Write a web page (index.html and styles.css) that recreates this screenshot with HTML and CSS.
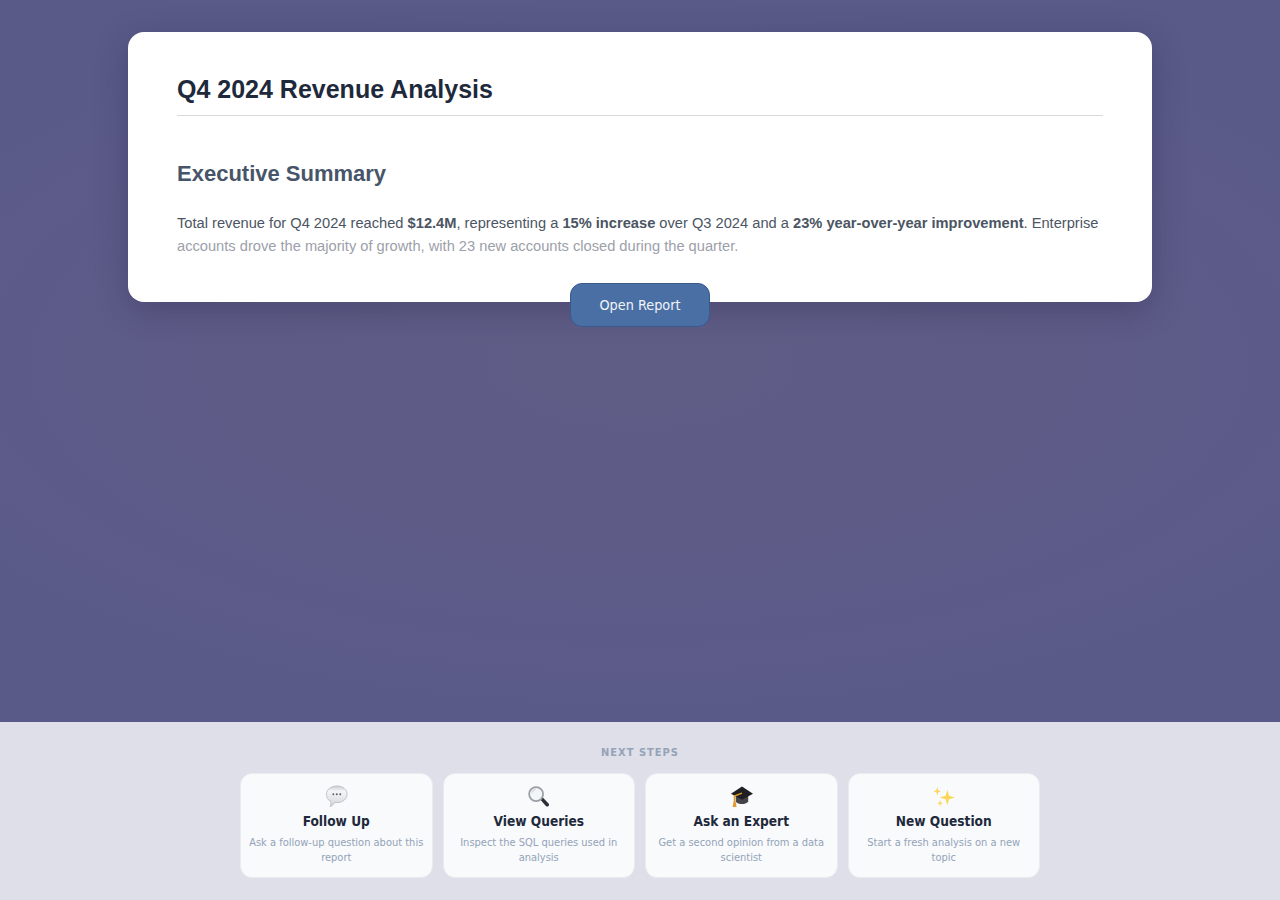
FILE: index.html
```html
<!DOCTYPE html>
<html lang="en">
<head>
  <meta charset="UTF-8">
  <title>Q4 2024 Revenue Analysis</title>
  <link rel="stylesheet" href="styles.css">
</head>
<body>
  <main class="stage">
    <div class="report-wrap">
      <article class="report">
        <h1>Q4 2024 Revenue Analysis</h1>
        <h2>Executive Summary</h2>
        <p>Total revenue for Q4 2024 reached <strong>$12.4M</strong>, representing a <strong>15% increase</strong> over Q3 2024 and a <strong>23% year-over-year improvement</strong>. Enterprise</p>
        <p class="fade">accounts drove the majority of growth, with 23 new accounts closed during the quarter.</p>
      </article>
      <button class="open-report">Open Report</button>
    </div>
  </main>

  <!-- Next steps panel -->
  <footer class="next-steps">
    <div class="next-label">NEXT STEPS</div>
    <div class="step-grid">
      <div class="step">
        <svg class="step-icon" viewBox="0 0 24 24">
          <defs>
            <linearGradient id="bubble" x1="0" y1="0" x2="0" y2="1">
              <stop offset="0" stop-color="#c9ccd1"/>
              <stop offset="0.25" stop-color="#f4f5f6"/>
              <stop offset="1" stop-color="#d4d6da"/>
            </linearGradient>
          </defs>
          <path d="M12.500 1c6 0 10.500 3.700 10.500 8.700s-4.500 8.700-10.500 8.700c-.9 0-1.700-.1-2.500-.2-1 2-2.500 3.500-4.700 4.300.8-1.700 1-3.300.8-5.300C3 15.700 1.500 13 1.500 9.700 1.500 4.700 6.500 1 12.500 1z" fill="url(#bubble)" stroke="#b4b7bc" stroke-width="0.800"/>
          <circle cx="8.700" cy="9.700" r="1" fill="#5c6068"/>
          <circle cx="12.300" cy="9.700" r="1" fill="#5c6068"/>
          <circle cx="15.900" cy="9.700" r="1" fill="#5c6068"/>
        </svg>
        <div class="step-title">Follow Up</div>
        <div class="step-desc">Ask a follow-up question about this report</div>
      </div>
      <div class="step">
        <svg class="step-icon" viewBox="0 0 24 24">
          <path d="M14 15.500l2.500-2.500 6 6.300c.8.900.7 2-.1 2.700s-1.900.8-2.700 0z" fill="#2c3036"/>
          <circle cx="9.500" cy="9.500" r="7.300" fill="#f3f6f8" stroke="#9a9fa6" stroke-width="1.800"/>
          <path d="M5 8c.6-2 2-3.200 4-3.500" fill="none" stroke="#d3d8dc" stroke-width="1.200"/>
        </svg>
        <div class="step-title">View Queries</div>
        <div class="step-desc">Inspect the SQL queries used in analysis</div>
      </div>
      <div class="step">
        <svg class="step-icon" viewBox="0 0 24 24">
          <path d="M6 10.500v7c2.500 2.700 9.500 3.700 13 0v-7z" fill="#44444a"/>
          <path d="M12.500 1.500L24 9 12.500 15.500 1 9z" fill="#1f1f23"/>
          <path d="M12.500 8.500L4.700 11.500V18" fill="none" stroke="#e39a2c" stroke-width="1.600"/>
          <path d="M3.600 17.500h2.300l1 5.500H2.800z" fill="#e39a2c"/>
        </svg>
        <div class="step-title">Ask an Expert</div>
        <div class="step-desc">Get a second opinion from a data scientist</div>
      </div>
      <div class="step">
        <svg class="step-icon" viewBox="0 0 24 24">
          <path d="M16 5l1.800 6.300L24 13l-6.200 1.800L16 21l-1.800-6.200L8 13l6.200-1.700z" fill="#fcd75a"/>
          <path d="M5.500 2l1 3.500 3 1-3 1-1 3.500-1-3.500-3-1 3-1z" fill="#fcd75a"/>
          <path d="M8.500 15.500l.8 2.700 2.200.8-2.200.8-.8 2.700-.8-2.700-2.200-.8 2.200-.8z" fill="#fcd75a"/>
        </svg>
        <div class="step-title">New Question</div>
        <div class="step-desc">Start a fresh analysis on a new topic</div>
      </div>
    </div>
  </footer>
</body>
</html>
```

FILE: styles.css
```css
/* Base styles */
html, body {
  height: 100%;
}
body {
  margin: 0;
  display: flex;
  flex-direction: column;
  font-family: "Liberation Sans", Arial, sans-serif;
  background-color: #dedfe8;
}

/* Dimmed report area */
.stage {
  height: 722px;
  box-sizing: border-box;
  padding-top: 32px;
  background: radial-gradient(ellipse 65% 50% at 50% 50%, #5f5c86 0%, #5e5b87 50%, #5a5a89 100%);
}
.report-wrap {
  position: relative;
  width: 1024px;
  margin: 0 auto;
}
.report {
  box-sizing: border-box;
  height: 270px;
  padding: 41px 49px 0;
  background-color: #fff;
  border-radius: 16px;
  box-shadow: 0 8px 32px rgba(30, 30, 60, 0.28);
}
.report h1 {
  margin: 0;
  padding-bottom: 9px;
  font-size: 25px;
  line-height: 33px;
  font-weight: 700;
  color: #1e293b;
  border-bottom: 1px solid #d8d9dd;
}
.report h2 {
  margin: 44px 0 24px;
  font-size: 22px;
  line-height: 28px;
  font-weight: 700;
  color: #475569;
}
.report p {
  margin: 0;
  font-size: 14.67px;
  line-height: 23px;
  white-space: nowrap;
  color: #4b5563;
}
.report p.fade {
  color: #9ca0a9;
}
.open-report {
  position: absolute;
  left: 442px;
  top: 251px;
  width: 140px;
  height: 44px;
  font-family: "DejaVu Sans Condensed", "DejaVu Sans", sans-serif;
  font-size: 14.3px;
  color: #f1f5f9;
  background-color: #4a6fa5;
  border: 1px solid #3a5a8c;
  border-radius: 12px;
}

/* Next steps panel */
.next-steps {
  flex: 1;
  padding-top: 24px;
  font-family: "DejaVu Sans Condensed", "DejaVu Sans", sans-serif;
  text-align: center;
}
.next-label {
  font-size: 11px;
  line-height: 13px;
  font-weight: 700;
  letter-spacing: 1px;
  color: #94a3b8;
}
.step-grid {
  display: grid;
  grid-template-columns: repeat(4, 1fr);
  gap: 10px;
  width: 800px;
  margin: 14px auto 0;
}
.step {
  box-sizing: border-box;
  height: 105px;
  padding: 11px 8px 0;
  background-color: #f8fafc;
  border: 1px solid #e9ebf1;
  border-radius: 12px;
}
.step-icon {
  display: block;
  width: 23px;
  height: 23px;
  margin: 0 auto;
}
.step-title {
  margin-top: 4px;
  font-size: 13.6px;
  line-height: 18px;
  font-weight: 700;
  color: #1e293b;
}
.step-desc {
  margin-top: 5px;
  font-size: 11px;
  line-height: 15px;
  color: #94a3b8;
}
```
